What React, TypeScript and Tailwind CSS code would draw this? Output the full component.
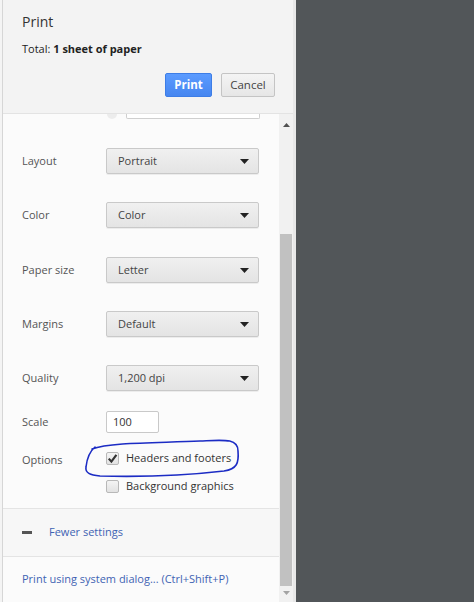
import React from "react";

const font = { fontFamily: '"Open Sans", "Noto Sans", Arial, sans-serif' };

function Arrow() {
  return (
    <svg width="9" height="5" viewBox="0 0 9 5" className="shrink-0">
      <path d="M0 0 L9 0 L4.5 5 Z" fill="#222" />
    </svg>
  );
}

function SelectRow({ label, value, mt }: { label: string; value: string; mt: string }) {
  return (
    <div className={`flex items-center h-[26px] ${mt}`}>
      <div className="w-[103px] pl-[19px] text-[11px] text-[#555]">{label}</div>
      <div className="w-[153px] h-[26px] flex items-center justify-between pl-[11px] pr-[9px] border border-[#c9c9c9] rounded-[2px] bg-gradient-to-b from-[#f0f0f0] to-[#e4e4e4] shadow-[0_1px_0_rgba(0,0,0,0.06)] text-[11px] text-[#444]">
        <span>{value}</span>
        <Arrow />
      </div>
    </div>
  );
}

function Checkbox({ checked }: { checked?: boolean }) {
  return (
    <div className="w-[13px] h-[13px] border border-[#b8b8b8] rounded-[2px] bg-gradient-to-b from-[#f4f4f4] to-[#e2e2e2] flex items-center justify-center shrink-0">
      {checked && (
        <svg width="11" height="11" viewBox="0 0 11 11">
          <path d="M1.8 5.6 L4.4 8.6 L9.4 1.8" stroke="#333" strokeWidth="2.2" fill="none" />
        </svg>
      )}
    </div>
  );
}

export default function App() {
  return (
    <div className="w-[474px] h-[602px] flex overflow-hidden bg-[#525659]" style={font}>
      <div className="w-[296px] h-full flex shrink-0 bg-[#f6f6f6] relative">
        <div className="w-[3px] h-full bg-[#f4f4f4] border-r border-[#d6d6d6]" />
        <div className="flex-1 flex flex-col">
          {/* header */}
          <div className="h-[114px] bg-[#f3f3f3] border-b border-[#e3e3e3] pl-[19px] pr-[18px] pt-[12px] flex flex-col shrink-0">
            <div className="text-[14px] text-[#333] leading-[20px]">Print</div>
            <div className="text-[11px] text-[#222] mt-[9px] leading-[16px]">
              Total: <span className="font-bold">1 sheet of paper</span>
            </div>
            <div className="flex justify-end gap-[9px] mt-[16px]">
              <div className="w-[47px] h-[24px] rounded-[2px] border border-[#3d7de6] bg-gradient-to-b from-[#5b9bff] to-[#4686f0] text-white font-bold text-[11.5px] flex items-center justify-center">
                Print
              </div>
              <div className="w-[54px] h-[24px] rounded-[2px] border border-[#c4c4c4] bg-gradient-to-b from-[#f4f4f4] to-[#e6e6e6] text-[#444] text-[11.5px] flex items-center justify-center">
                Cancel
              </div>
            </div>
          </div>
          {/* body */}
          <div className="flex-1 flex min-h-0">
            <div className="flex-1 flex flex-col bg-[#fbfbfb]">
              <div className="h-[5px] flex shrink-0">
                <div className="ml-[104px] w-[10px] h-[5px] rounded-b-full bg-[#ececec]" />
                <div className="ml-[9px] w-[134px] h-[5px] border border-t-0 border-[#cfcfcf] rounded-b-[2px] bg-white" />
              </div>
              <SelectRow label="Layout" value="Portrait" mt="mt-[29px]" />
              <SelectRow label="Color" value="Color" mt="mt-[28px]" />
              <SelectRow label="Paper size" value="Letter" mt="mt-[29px]" />
              <SelectRow label="Margins" value="Default" mt="mt-[28px]" />
              <SelectRow label="Quality" value="1,200 dpi" mt="mt-[28px]" />
              <div className="flex items-center mt-[20px] h-[22px]">
                <div className="w-[103px] pl-[19px] text-[11px] text-[#555]">Scale</div>
                <div className="w-[53px] h-[22px] border border-[#c9c9c9] rounded-[2px] bg-white text-[11px] text-[#333] pl-[6px] flex items-center">
                  100
                </div>
              </div>
              <div className="flex items-center mt-[17px] h-[16px]">
                <div className="w-[103px] pl-[19px] text-[11px] text-[#555] pt-[4px]">Options</div>
                <div className="flex items-center gap-[7px]">
                  <Checkbox checked />
                  <span className="text-[11px] text-[#333]">Headers and footers</span>
                </div>
              </div>
              <div className="flex items-center mt-[12px] h-[16px] pl-[103px]">
                <Checkbox />
                <span className="text-[11px] text-[#333] ml-[7px]">Background graphics</span>
              </div>
              <div className="mt-[14px] h-[49px] border-t border-b border-[#e4e4e4] bg-[#f7f7f7] flex items-center pl-[19px] shrink-0">
                <div className="w-[10px] h-[3px] bg-[#555]" />
                <span className="ml-[17px] text-[11px] text-[#3f63b3]">Fewer settings</span>
              </div>
              <div className="h-[46px] flex items-center pl-[19px] text-[11px] text-[#3f63b3]">
                Print using system dialog... (Ctrl+Shift+P)
              </div>
            </div>
            {/* scrollbar */}
            <div className="w-[14px] bg-[#f1f1f1] flex flex-col items-center">
              <svg width="7" height="4" viewBox="0 0 7 4" className="mt-[9px]">
                <path d="M0 4 L7 4 L3.5 0 Z" fill="#505050" />
              </svg>
              <div className="w-[12px] bg-[#c1c1c1] mt-[107px] h-[352px]" />
              <svg width="7" height="4" viewBox="0 0 7 4" className="mt-[5px]">
                <path d="M0 0 L7 0 L3.5 4 Z" fill="#a3a3a3" />
              </svg>
            </div>
          </div>
        </div>
        <div className="w-[3px] h-full bg-[#e8e8e8]" />
        {/* hand-drawn annotation */}
        <svg className="absolute left-0 top-0 pointer-events-none" width="296" height="602" viewBox="0 0 296 602">
          <path
            d="M92 449 C110 442, 160 443, 200 441 C224 440, 238 438, 238 451 C239 463, 237 469, 224 471 C190 475, 140 477, 100 476 C90 475, 85 473, 86 467 C87 458, 89 452, 95 447"
            stroke="#1c2cc4"
            strokeWidth="1.6"
            fill="none"
            strokeLinecap="round"
          />
        </svg>
      </div>
      <div className="flex-1" />
    </div>
  );
}
